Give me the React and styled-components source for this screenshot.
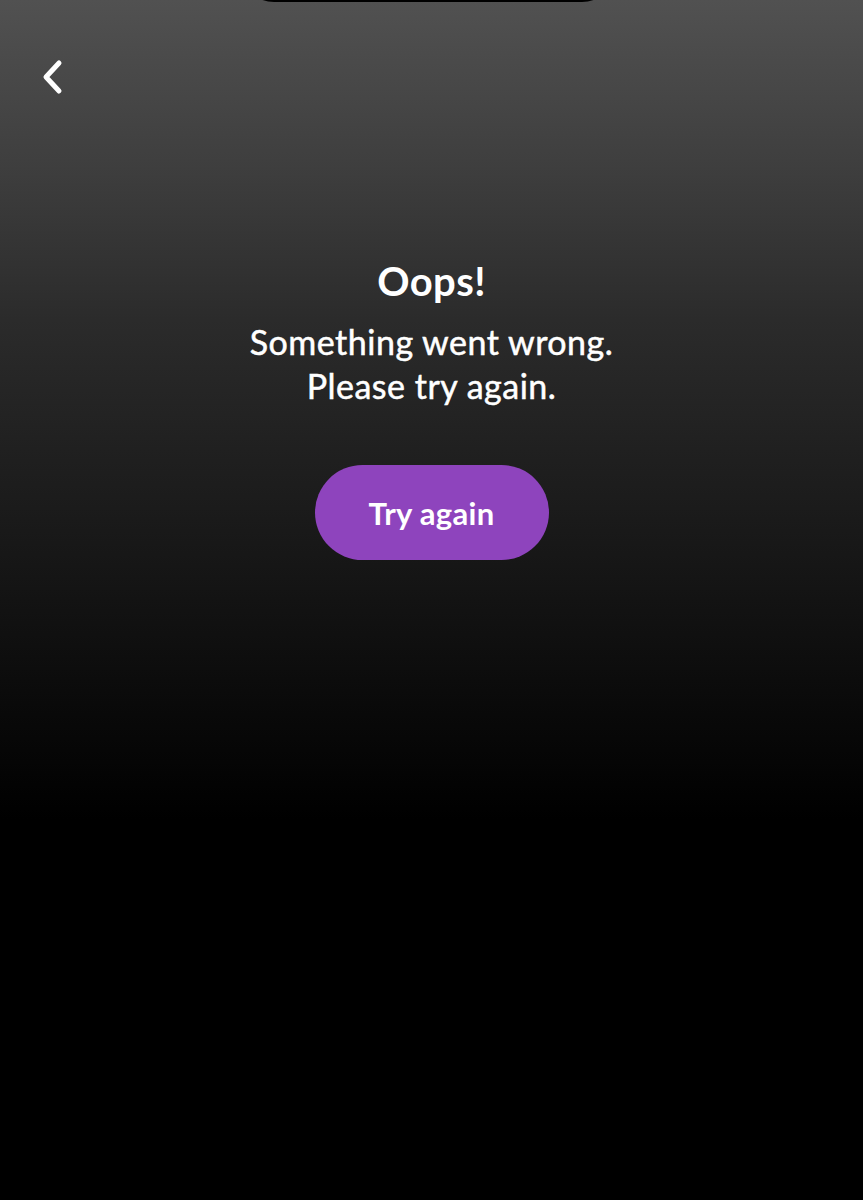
import React from "react";
import styled, { createGlobalStyle } from "styled-components";

const GlobalStyle = createGlobalStyle`
  html, body {
    margin: 0;
    padding: 0;
    background: #000;
  }
  body {
    font-family: Lato, "Noto Sans", sans-serif;
  }
`;

// whole screen with the grey-to-black fade
const Screen = styled.div`
  position: relative;
  width: 863px;
  height: 1200px;
  overflow: hidden;
  background: linear-gradient(
    180deg,
    #515151 0px,
    #3f3f3f 160px,
    #2b2b2b 320px,
    #1a1a1a 520px,
    #0c0c0c 680px,
    #000 820px,
    #000 100%
  );
  display: flex;
  flex-direction: column;
`;

// bottom edge of the device notch, sits over the top of the screen
const Notch = styled.div`
  position: absolute;
  top: -40px;
  left: 240px;
  width: 376px;
  height: 42px;
  background: #000;
  border-radius: 0 0 34px 34px;
`;

const TopBar = styled.div`
  height: 259px;
  padding: 58px 0 0 38px;
  box-sizing: border-box;
`;

const BackButton = styled.button`
  background: none;
  border: 0;
  padding: 0;
  width: 28px;
  height: 38px;
  cursor: pointer;
  display: flex;
  align-items: center;
  justify-content: center;
`;

const Content = styled.div`
  display: flex;
  flex-direction: column;
  align-items: center;
  color: #fff;
  text-align: center;
`;

const Title = styled.h1`
  margin: 0;
  font-size: 40px;
  font-weight: 700;
  line-height: 44px;
  letter-spacing: 0.4px;
`;

const Message = styled.p`
  margin: 17px 0 0;
  font-size: 34px;
  font-weight: 400;
  line-height: 44px;
  letter-spacing: 0.5px;
  -webkit-text-stroke: 0.5px #fff;
`;

const RetryButton = styled.button`
  margin-top: 57px;
  width: 234px;
  height: 95px;
  border: 0;
  border-radius: 48px;
  background: #8e44bd;
  color: #fff;
  font-family: inherit;
  font-size: 31px;
  font-weight: 700;
  letter-spacing: 0.3px;
  cursor: pointer;
`;

const BackIcon = () => (
  <svg width="24" height="36" viewBox="0 0 24 36" fill="none">
    <path
      d="M19 4 L6 18 L19 32"
      stroke="#fff"
      strokeWidth="5"
      strokeLinecap="round"
      strokeLinejoin="round"
    />
  </svg>
);

export default function App() {
  return (
    <>
      <GlobalStyle />
      <Screen>
        <Notch />
        <TopBar>
          <BackButton aria-label="Back">
            <BackIcon />
          </BackButton>
        </TopBar>
        <Content>
          <Title>Oops!</Title>
          <Message>
            Something went wrong.
            <br />
            Please try again.
          </Message>
          <RetryButton>Try again</RetryButton>
        </Content>
      </Screen>
    </>
  );
}
